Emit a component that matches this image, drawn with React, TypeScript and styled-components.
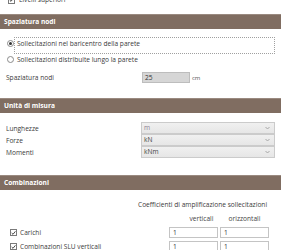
import React from "react";
import styled, { createGlobalStyle } from "styled-components";

const Global = createGlobalStyle`
  html, body { margin: 0; padding: 0; background: #ffffff; }
  body { font-family: "Open Sans", "Noto Sans", sans-serif; font-size: 6.6px; color: #3a3a3a; overflow: hidden; }
  * { box-sizing: border-box; }
`;

const Page = styled.div`
  width: 281px;
  height: 250px;
  overflow: hidden;
  display: flex;
  flex-direction: column;
`;

const TopRow = styled.div`
  display: flex;
  align-items: center;
  gap: 4px;
  height: 10px;
  margin-top: -5px;
  padding-left: 8px;
  line-height: 10px;
`;

const Header = styled.div<{ $mt: number }>`
  margin-top: ${(p) => p.$mt}px;
  height: 15px;
  line-height: 14px;
  background: #806d61;
  border-top: 1px solid #9a8a80;
  color: #ffffff;
  font-weight: 700;
  padding-left: 4px;
  font-size: 6.6px;
`;

const RadioList = styled.div`
  display: flex;
  flex-direction: column;
  margin-top: 8px;
`;

const RadioRow = styled.div`
  display: flex;
  align-items: flex-start;
  height: 16px;
  padding-left: 7px;
  padding-right: 6px;
`;

const RadioDot = styled.span<{ $on?: boolean }>`
  width: 7px;
  height: 7px;
  margin-top: 3px;
  border-radius: 50%;
  border: 1px solid #8a8a8a;
  background: #fff;
  flex: none;
  display: flex;
  align-items: center;
  justify-content: center;
  &::after {
    content: "";
    width: 3px;
    height: 3px;
    border-radius: 50%;
    background: ${(p) => (p.$on ? "#333" : "transparent")};
  }
`;

const RadioLabel = styled.span<{ $focus?: boolean }>`
  flex: 1;
  height: 17px;
  margin-left: 0;
  padding: 0 2px;
  line-height: 11px;
  border: 1px dotted ${(p) => (p.$focus ? "#a0a0a0" : "transparent")};
  white-space: nowrap;
`;

const FieldRow = styled.div<{ $mt: number }>`
  display: flex;
  align-items: center;
  margin-top: ${(p) => p.$mt}px;
  height: 11px;
`;

const FieldLabel = styled.span`
  width: 142px;
  padding-left: 6px;
  flex: none;
`;

const GrayInput = styled.div`
  width: 48px;
  height: 11px;
  line-height: 9px;
  background: #d6d6d6;
  border: 1px solid #bdbdbd;
  padding-left: 2px;
  color: #333;
`;

const Unit = styled.span`
  margin-left: 2px;
  color: #555;
  font-size: 6px;
`;

const SelectList = styled.div`
  display: flex;
  flex-direction: column;
  margin-top: 9px;
`;

const SelectRow = styled.div`
  display: flex;
  align-items: center;
  height: 12px;
`;

const Select = styled.div<{ $muted?: boolean }>`
  width: 134px;
  height: 12px;
  margin-left: -1px;
  border: 1px solid #cbcbcb;
  background: linear-gradient(#f0f0f0, #e6e6e6);
  display: flex;
  align-items: center;
  justify-content: space-between;
  padding: 0 4px 0 2px;
  color: ${(p) => (p.$muted ? "#8d7e92" : "#444")};
  line-height: 10px;
`;

const Chevron = () => (
  <svg width="5" height="4" viewBox="0 0 5 4">
    <path d="M0.5 1 L2.5 3 L4.5 1" fill="none" stroke="#a0a0a0" strokeWidth="0.9" />
  </svg>
);

const CoefTitle = styled.div`
  margin-top: 9px;
  padding-left: 138px;
  height: 11px;
  line-height: 11px;
  white-space: nowrap;
`;

const ColHeads = styled.div`
  display: grid;
  grid-template-columns: 169px 49px 2px 49px;
  margin-top: 3px;
  height: 11px;
  line-height: 11px;
  color: #444;
`;

const ColHead = styled.span<{ $shift: number }>`
  text-align: center;
  transform: translateX(${(p) => p.$shift}px);
`;

const CombRow = styled.div<{ $mt: number }>`
  display: grid;
  grid-template-columns: 169px 49px 2px 49px;
  align-items: center;
  margin-top: ${(p) => p.$mt}px;
  height: 11px;
`;

const CheckCell = styled.label`
  display: flex;
  align-items: center;
  gap: 3px;
  padding-left: 10px;
  white-space: nowrap;
`;

const CheckBox = styled.span`
  width: 7px;
  height: 7px;
  border: 1px solid #7a7a7a;
  background: #fff;
  display: flex;
  align-items: center;
  justify-content: center;
  flex: none;
`;

const WhiteInput = styled.div`
  height: 11px;
  border: 1px solid #c4c4c4;
  background: #fff;
  padding-left: 3px;
  line-height: 9px;
  color: #333;
`;

const Spacer = styled.span``;

const Tick = () => (
  <svg width="6" height="6" viewBox="0 0 6 6">
    <path d="M0.8 3 L2.4 4.6 L5.3 1" fill="none" stroke="#222" strokeWidth="1" />
  </svg>
);

const units: [string, string, boolean][] = [
  ["Lunghezze", "m", true],
  ["Forze", "kN", false],
  ["Momenti", "kNm", false],
];

const combos = ["Carichi", "Combinazioni SLU verticali"];

export default function App() {
  return (
    <Page>
      <Global />
      <TopRow>
        <CheckBox>
          <Tick />
        </CheckBox>
        <span>Livelli superiori</span>
      </TopRow>

      <Header $mt={9}>Spaziatura nodi</Header>
      <RadioList>
        <RadioRow>
          <RadioDot $on />
          <RadioLabel $focus>Sollecitazioni nel baricentro della parete</RadioLabel>
        </RadioRow>
        <RadioRow>
          <RadioDot />
          <RadioLabel>Sollecitazioni distribuite lungo la parete</RadioLabel>
        </RadioRow>
      </RadioList>
      <FieldRow $mt={3}>
        <FieldLabel>Spaziatura nodi</FieldLabel>
        <GrayInput>25</GrayInput>
        <Unit>cm</Unit>
      </FieldRow>

      <Header $mt={15}>Unità di misura</Header>
      <SelectList>
        {units.map(([l, v, m]) => (
          <SelectRow key={l}>
            <FieldLabel>{l}</FieldLabel>
            <Select $muted={m}>
              <span>{v}</span>
              <Chevron />
            </Select>
          </SelectRow>
        ))}
      </SelectList>

      <Header $mt={17}>Combinazioni</Header>
      <CoefTitle>Coefficienti di amplificazione sollecitazioni</CoefTitle>
      <ColHeads>
        <Spacer />
        <ColHead $shift={8}>verticali</ColHead>
        <Spacer />
        <ColHead $shift={0}>orizzontali</ColHead>
      </ColHeads>
      {combos.map((c) => (
        <CombRow $mt={3} key={c}>
          <CheckCell>
            <CheckBox>
              <Tick />
            </CheckBox>
            {c}
          </CheckCell>
          <WhiteInput>1</WhiteInput>
          <Spacer />
          <WhiteInput>1</WhiteInput>
        </CombRow>
      ))}
    </Page>
  );
}
